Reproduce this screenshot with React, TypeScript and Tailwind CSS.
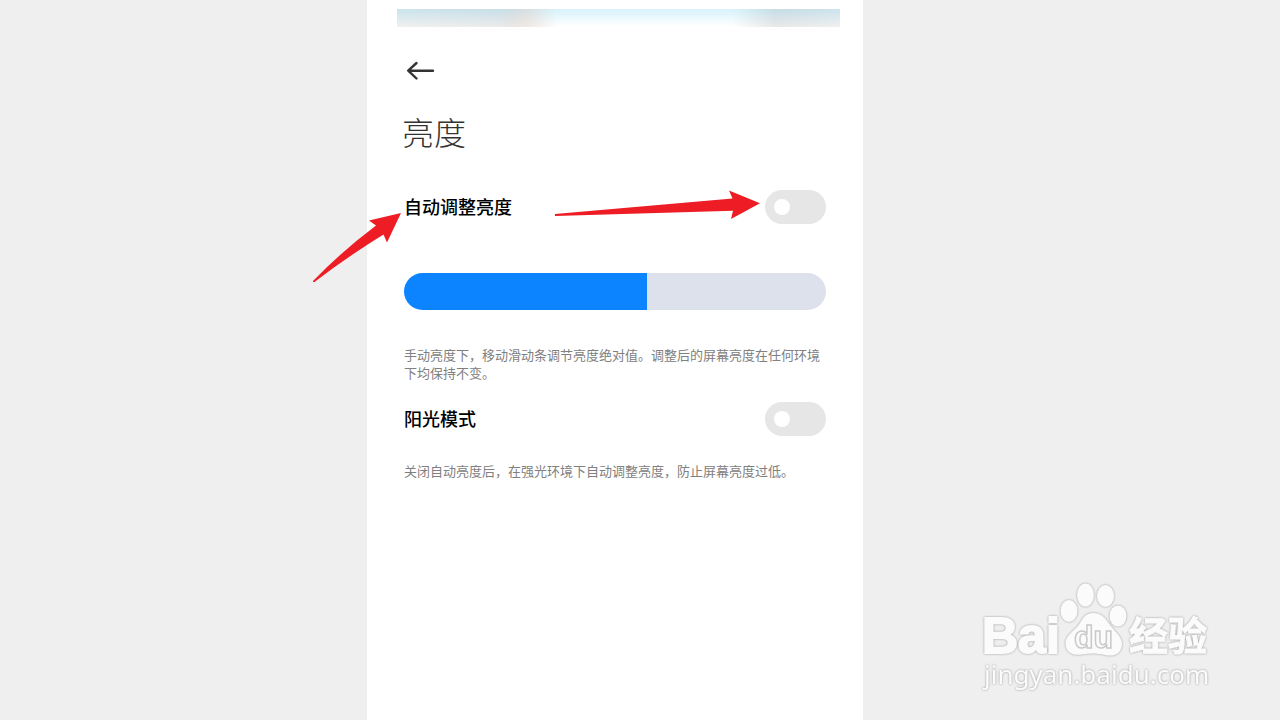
import { useState } from "react";

type SwitchRowProps = { id: string; label: string };

function SwitchRow({ id, label }: SwitchRowProps) {
  const [on, setOn] = useState(false);
  return (
    <div className="flex h-[34px] items-center justify-between">
      <label htmlFor={id} className="pb-0.5 text-lg font-medium text-black">
        {label}
      </label>
      <input
        id={id}
        type="checkbox"
        role="switch"
        checked={on}
        onChange={(e) => setOn(e.target.checked)}
        className="flex h-[34px] w-[61px] shrink-0 cursor-pointer appearance-none items-center rounded-full bg-[#e6e6e6] px-[9px] before:block before:size-4 before:rounded-full before:bg-white before:content-[''] checked:justify-end checked:bg-[#0d84ff]"
      />
    </div>
  );
}

function BrightnessSlider() {
  const [value, setValue] = useState(577);
  const percent = value / 10;
  return (
    <input
      type="range"
      min={0}
      max={1000}
      value={value}
      aria-label="亮度"
      onChange={(e) => setValue(Number(e.target.value))}
      className="mt-[49px] block h-[37px] w-full cursor-pointer appearance-none rounded-full [&::-webkit-slider-thumb]:size-0 [&::-webkit-slider-thumb]:appearance-none"
      style={{
        backgroundImage: `linear-gradient(to right, #0d84ff ${percent}%, #dde1eb ${percent}%)`,
      }}
    />
  );
}

function StatusStrip() {
  return (
    <div className="ml-[30px] mr-[23px] flex h-[18px] justify-between bg-linear-to-b from-[#d8f2fc] to-white">
      <div className="w-[160px] bg-linear-to-r from-black/6 via-black/8 via-70% to-transparent">
        <div className="h-full bg-linear-to-r from-transparent from-65% via-[#f0c8b4]/25 via-80% to-transparent" />
      </div>
      <div className="w-[108px] bg-linear-to-l from-black/6 via-black/9 via-60% to-transparent" />
    </div>
  );
}

function Arrows() {
  return (
    <svg
      className="pointer-events-none absolute -left-[60px] top-[186px]"
      width="460"
      height="100"
      viewBox="0 0 460 100"
      fill="#ee1c24"
      aria-hidden="true"
    >
      <path d="M6 95 Q34 66 69 39.5 L62 34.5 L94 27 L80 56.5 L76.500 48.500 Q40 71 7.500 96 L6 96 Z" />
      <path d="M248 28 L425.500 12.500 L422 4.500 L453 17.200 L424 33 L426 24.700 L248 30 Z" />
    </svg>
  );
}

function Watermark() {
  return (
    <svg
      className="pointer-events-none absolute bottom-5 right-[60px] drop-shadow-[0_0_1px_#9a9a9a]"
      width="250"
      height="125"
      viewBox="0 0 250 125"
      fill="#fbfbfb"
      role="img"
      aria-label="Baidu 经验 jingyan.baidu.com"
      overflow="visible"
    >
      <ellipse cx="99" cy="36" rx="8.500" ry="11" />
      <ellipse cx="115.500" cy="20" rx="8.500" ry="11.500" />
      <ellipse cx="135.500" cy="21" rx="8.500" ry="11" />
      <ellipse cx="148" cy="41" rx="8.500" ry="10.500" />
      <path d="M123 38 C113 38 112 47 107 52 C101 58 95 62 95.500 69 C96 78 104 81 112 79.500 C119 78 127 78 135 80 C144 82 151 79 152 70 C152.500 62 146 58 140 50 C135 43 132 38 123 38 Z" />
      <g className="font-['Liberation_Sans',sans-serif] font-bold">
        <text x="12" y="78" fontSize="50" stroke="#fbfbfb" strokeWidth="2">
          Bai
        </text>
        <text x="104" y="73" fontSize="32" stroke="#c9c9c9" strokeWidth="1.500">
          du
        </text>
      </g>
      <text
        x="159"
        y="75"
        fontSize="39"
        stroke="#fbfbfb"
        strokeWidth="1"
        className="font-['Noto_Sans_CJK_SC',sans-serif] font-bold"
      >
        经验
      </text>
      <text x="14" y="109" fontSize="26" className="font-['Noto_Sans',sans-serif]">
        jingyan.baidu.com
      </text>
    </svg>
  );
}

export default function App() {
  return (
    <div className="relative grid min-h-screen grid-cols-[367fr_496px_417fr] overflow-hidden bg-[#efefef] font-['Noto_Sans_CJK_SC',sans-serif]">
      <main className="relative col-start-2 bg-white pt-[9px]">
        <StatusStrip />
        <div className="px-[37px] pt-8">
          <button type="button" aria-label="返回" className="block h-6 w-8 cursor-pointer">
            <svg
              width="32"
              height="24"
              viewBox="0 0 32 24"
              fill="none"
              stroke="#333333"
              strokeWidth="2.400"
              strokeLinecap="round"
              strokeLinejoin="round"
            >
              <path d="M12.500 4 L4.200 11.700 L12.500 19.500 M4.500 11.700 H29" />
            </svg>
          </button>
          <h1 className="mt-7 -ml-0.5 text-[32px] leading-10 font-light text-[#333333]">亮度</h1>
          <div className="mt-[39px]">
            <SwitchRow id="auto-brightness" label="自动调整亮度" />
          </div>
          <BrightnessSlider />
          <p className="mt-9 text-[13px] leading-[18px] text-[#808080]">
            手动亮度下，移动滑动条调节亮度绝对值。调整后的屏幕亮度在任何环境下均保持不变。
          </p>
          <div className="mt-5">
            <SwitchRow id="sunlight-mode" label="阳光模式" />
          </div>
          <p className="mt-[26px] text-[13px] leading-[18px] text-[#808080]">
            关闭自动亮度后，在强光环境下自动调整亮度，防止屏幕亮度过低。
          </p>
        </div>
        <Arrows />
      </main>
      <Watermark />
    </div>
  );
}
